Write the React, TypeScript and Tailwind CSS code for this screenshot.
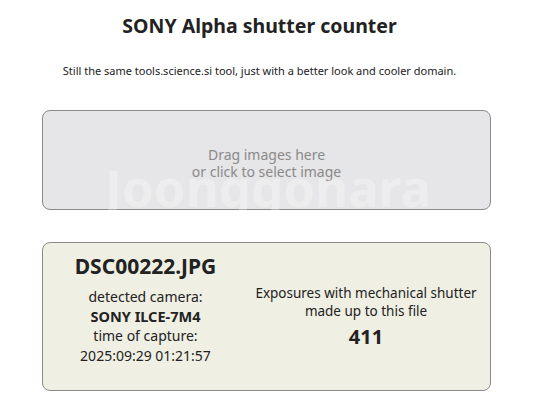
export default function App() {
  return (
    <div className="relative min-h-[400px] bg-white text-[#222] font-['Noto_Sans',sans-serif] overflow-hidden">
      {/* Header */}
      <h1 className="pt-[11px] pr-[19px] text-center text-[19.5px] font-bold leading-[30px] text-[#222]">SONY Alpha shutter counter</h1>
      <p className="mt-[21px] pr-[19px] text-center text-[11px] leading-[18px] text-[#222]">
        Still the same tools.science.si tool, just with a better look and cooler domain.
      </p>

      {/* Drop zone */}
      <div className="ml-[42px] mr-[47px] mt-[30px] h-[100px] rounded-[8px] border border-[#8a8a8a] bg-[#e6e5e7] flex flex-col items-center justify-center pt-[6px] text-[14px] leading-[17px] text-[#8a8a8a]">
        <span>Drag images here</span>
        <span>or click to select image</span>
      </div>

      {/* Result */}
      <div className="ml-[42px] mr-[47px] mt-[32px] h-[149px] rounded-[8px] border border-[#8a8a8a] bg-[#efefe3] flex">
        <div className="w-[205px] flex flex-col items-center pt-[9px] text-[14px] leading-[19.7px]">
          <span className="text-[21px] font-bold leading-[28px] mb-[7px]">DSC00222.JPG</span>
          <span>detected camera:</span>
          <span className="font-bold text-[14.5px]">SONY ILCE-7M4</span>
          <span>time of capture:</span>
          <span>2025:09:29 01:21:57</span>
        </div>
        <div className="flex-1 flex flex-col items-center pt-[41px] pr-[6px] text-[13.5px] leading-[18px]">
          <span>Exposures with mechanical shutter</span>
          <span>made up to this file</span>
          <span className="mt-[4px] text-[20px] font-bold leading-[26px]">411</span>
        </div>
      </div>

      {/* Watermark */}
      <div className="pointer-events-none absolute left-[105px] top-[157px] text-[51px] font-bold leading-[60px] text-white/30">
        Joonggonara
      </div>
    </div>
  );
}
